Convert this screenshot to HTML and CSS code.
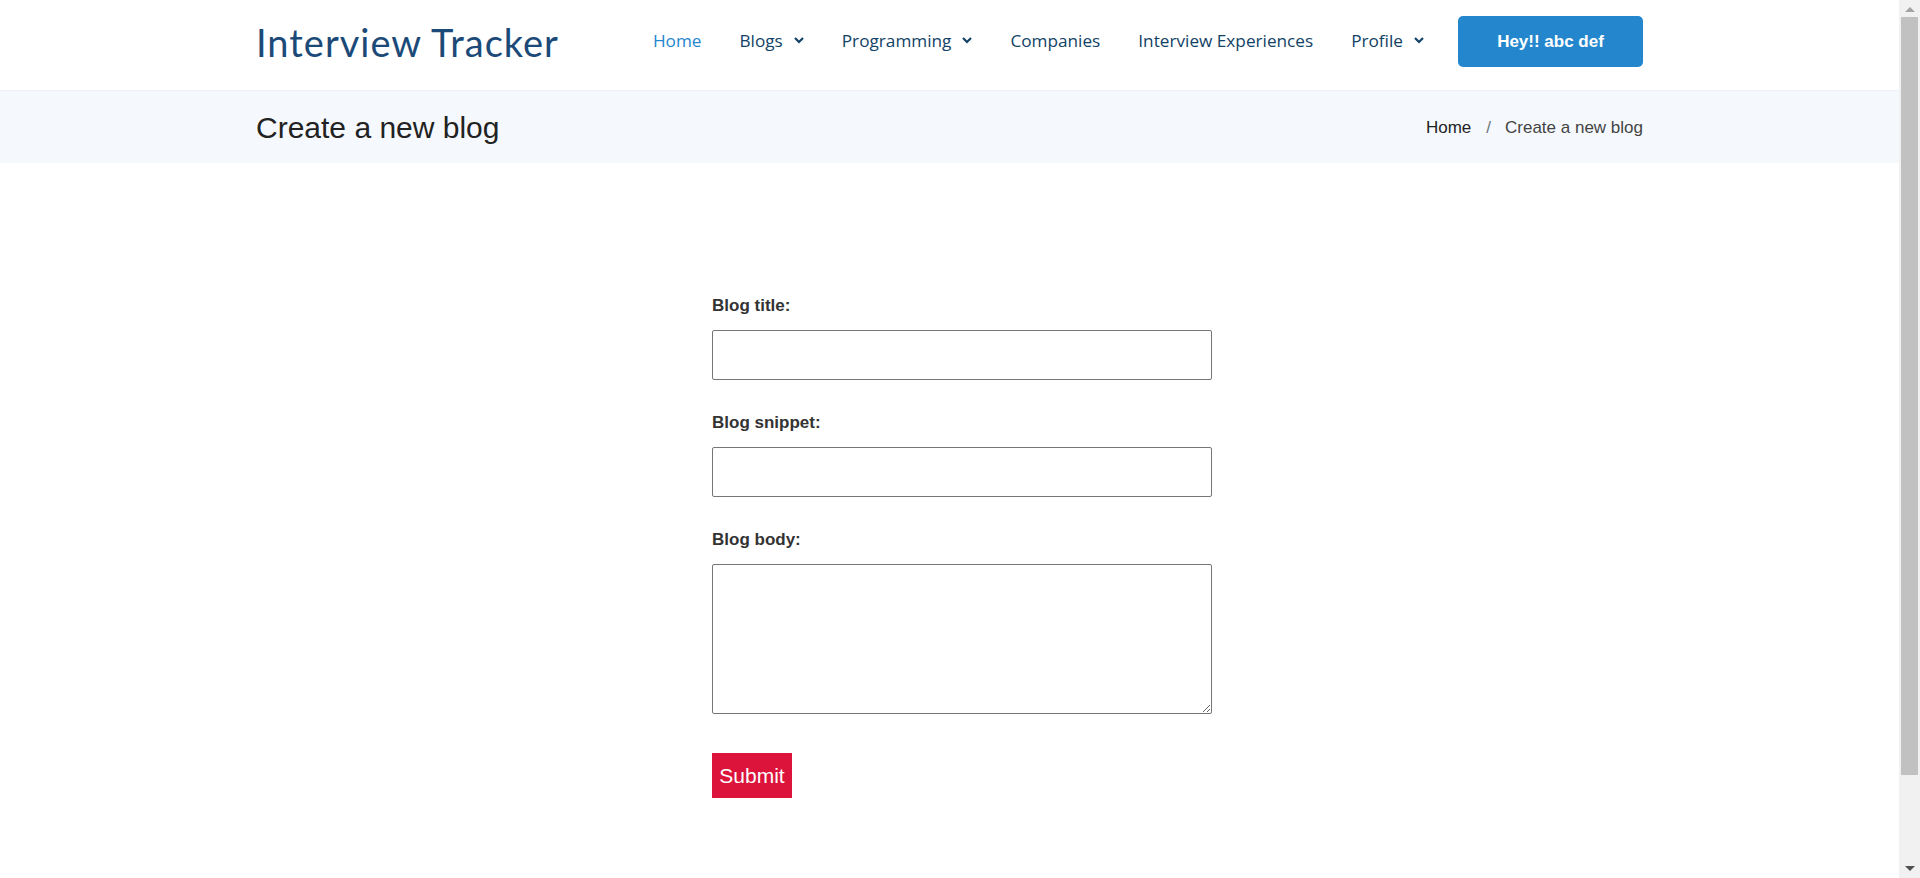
FILE: index.html
```html
<!DOCTYPE html>
<html lang="en">
<head>
<meta charset="utf-8">
<title>Create a new blog - Interview Tracker</title>
<link rel="stylesheet" href="styles.css">
</head>
<body>
<header class="header">
  <div class="container header-inner">
    <a class="logo" href="#">Interview Tracker</a>
    <nav class="navbar">
      <ul class="nav-list">
        <li><a class="nav-link active" href="#">Home</a></li>
        <li><a class="nav-link" href="#">Blogs<svg class="chev" viewBox="0 0 10 7" width="10" height="7"><polyline points="1,1 5,5 9,1"/></svg></a></li>
        <li><a class="nav-link" href="#">Programming<svg class="chev" viewBox="0 0 10 7" width="10" height="7"><polyline points="1,1 5,5 9,1"/></svg></a></li>
        <li><a class="nav-link" href="#">Companies</a></li>
        <li><a class="nav-link" href="#">Interview Experiences</a></li>
        <li><a class="nav-link" href="#">Profile<svg class="chev" viewBox="0 0 10 7" width="10" height="7"><polyline points="1,1 5,5 9,1"/></svg></a></li>
      </ul>
    </nav>
    <a class="hey-btn" href="#">Hey!! abc def</a>
  </div>
</header>

<section class="breadcrumbs">
  <div class="container crumbs-inner">
    <h2 class="page-title">Create a new blog</h2>
    <ol class="crumbs">
      <li><a href="#">Home</a></li>
      <li class="sep">/</li>
      <li class="current">Create a new blog</li>
    </ol>
  </div>
</section>

<main class="main">
  <div class="create">
    <form class="blog-form">
      <label class="lbl" for="title">Blog title:</label>
      <input class="field" id="title" type="text">
      <label class="lbl" for="snippet">Blog snippet:</label>
      <input class="field" id="snippet" type="text">
      <label class="lbl" for="body">Blog body:</label>
      <textarea class="field area" id="body"></textarea>
      <button class="submit" type="button">Submit</button>
    </form>
  </div>
</main>

<div class="scrollbar" aria-hidden="true">
  <span class="sb-arrow sb-up"></span>
  <span class="sb-thumb"></span>
  <span class="sb-arrow sb-down"></span>
</div>
</body>
</html>
```
FILE: styles.css
```css
* { box-sizing: border-box; }
body {
  margin: 0 21px 0 0;
  font-family: "Liberation Sans", Arial, sans-serif;
  color: #444;
  background: #fff;
}
a { text-decoration: none; }
.container {
  width: 1387px;
  margin: 0 auto;
}
.header {
  height: 90px;
  background: #fff;
  padding-bottom: 7px;
}
.header-inner {
  height: 83px;
  display: flex;
  align-items: center;
}
.logo {
  font-family: "Lato", sans-serif;
  font-weight: 400;
  font-size: 38px;
  color: #1c4a78;
  letter-spacing: 1px;
}
.navbar { margin-left: auto; }
.nav-list {
  list-style: none;
  margin: 0 0 2px;
  padding: 0;
  display: flex;
  gap: 38px;
}
.nav-link {
  display: flex;
  align-items: center;
  font-family: "Open Sans", sans-serif;
  font-size: 17.2px;
  color: #124265;
}
.nav-link.active { color: #2487ce; }
.chev {
  margin-left: 11px;
  fill: none;
  stroke: #124265;
  stroke-width: 2.2;
}
.hey-btn {
  margin-left: 34px;
  width: 185px;
  height: 51px;
  border-radius: 5px;
  background: #2487ce;
  color: #fff;
  font-family: "Liberation Sans", Arial, sans-serif;
  font-weight: 700;
  font-size: 17px;
  display: flex;
  align-items: center;
  justify-content: center;
}
.breadcrumbs {
  background: #f5f9fd;
  border-top: 1px solid #edf1f6;
  height: 73px;
}
.crumbs-inner {
  height: 72px;
  display: flex;
  align-items: center;
  justify-content: space-between;
}
.page-title {
  margin: 2px 0 0;
  font-weight: 400;
  font-size: 30px;
  color: #222;
}
.crumbs {
  list-style: none;
  margin: 2px 0 0;
  padding: 0;
  display: flex;
  font-size: 17px;
}
.crumbs a { color: #222; }
.crumbs .sep { color: #6c757d; margin: 0 14px 0 15px; }
.crumbs .current { color: #444; }
.main {
  padding-top: 133px;
  padding-bottom: 197px;
}
.create {
  width: 525px;
  margin: 0 auto;
  padding-left: 25px;
}
.blog-form {
  width: 500px;
}
.lbl {
  display: block;
  font-weight: 700;
  font-size: 17px;
  color: #333;
  margin-bottom: 14px;
}
.field {
  display: block;
  width: 500px;
  height: 50px;
  border: 1px solid #767676;
  border-radius: 2px;
  margin: 0 0 33px;
  font: inherit;
}
.area {
  height: 150px;
  margin-bottom: 39px;
}
.submit {
  display: block;
  width: 80px;
  height: 45px;
  border: 0;
  background: #dc143c;
  color: #fff;
  font-family: "Liberation Sans", Arial, sans-serif;
  font-size: 21px;
  padding: 0;
}
.scrollbar {
  position: fixed;
  top: 0;
  right: 0;
  width: 21px;
  height: 100vh;
  background: #f1f1f1;
  display: flex;
  flex-direction: column;
  align-items: center;
}
.sb-arrow {
  width: 0;
  height: 0;
  border-left: 5px solid transparent;
  border-right: 5px solid transparent;
}
.sb-up {
  margin-top: 7px;
  border-bottom: 5px solid #a3a3a3;
}
.sb-down {
  margin-top: auto;
  margin-bottom: 7px;
  border-top: 5px solid #505050;
}
.sb-thumb {
  margin-top: 5px;
  width: 17px;
  height: 758px;
  background: #c1c1c1;
}
```
